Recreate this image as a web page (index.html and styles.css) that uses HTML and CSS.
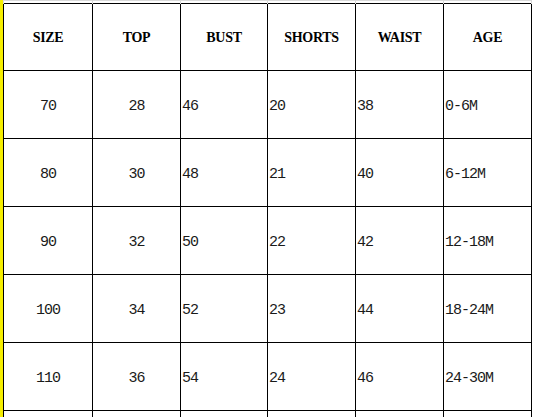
FILE: index.html
```html
<!DOCTYPE html>
<html>
<head>
<meta charset="utf-8">
<link rel="stylesheet" href="styles.css">
</head>
<body>
<div class="page">
  <div class="stripe"></div>
  <table class="sizes">
    <colgroup>
      <col class="c1"><col class="c2"><col class="c3"><col class="c4"><col class="c5"><col class="c6">
    </colgroup>
    <tr class="pad"><td></td><td></td><td></td><td></td><td></td><td></td></tr>
    <tr class="head">
      <th>SIZE</th><th>TOP</th><th>BUST</th><th>SHORTS</th><th>WAIST</th><th>AGE</th>
    </tr>
    <tr><td class="ctr">70</td><td class="ctr">28</td><td>46</td><td>20</td><td>38</td><td>0-6M</td></tr>
    <tr><td class="ctr">80</td><td class="ctr">30</td><td>48</td><td>21</td><td>40</td><td>6-12M</td></tr>
    <tr><td class="ctr">90</td><td class="ctr">32</td><td>50</td><td>22</td><td>42</td><td>12-18M</td></tr>
    <tr><td class="ctr">100</td><td class="ctr">34</td><td>52</td><td>23</td><td>44</td><td>18-24M</td></tr>
    <tr><td class="ctr">110</td><td class="ctr">36</td><td>54</td><td>24</td><td>46</td><td>24-30M</td></tr>
    <tr><td class="ctr"></td><td class="ctr"></td><td></td><td></td><td></td><td></td></tr>
  </table>
</div>
</body>
</html>
```
FILE: styles.css
```css
html, body {
  margin: 0;
  padding: 0;
  background: #ffffff;
  overflow: hidden;
}

.page {
  display: flex;
  align-items: flex-start;
  height: 417px;
  overflow: hidden;
}

.stripe {
  width: 3px;
  flex: 0 0 3px;
  height: 417px;
  background: #f5ee00;
}

.sizes {
  border-collapse: collapse;
  table-layout: fixed;
  width: 529px;
  flex: 0 0 auto;
  font-family: "Liberation Mono", "DejaVu Sans Mono", monospace;
  color: #000;
}

.c1 { width: 89px; }
.c2 { width: 88px; }
.c3 { width: 87px; }
.c4 { width: 88px; }
.c5 { width: 88px; }
.c6 { width: 88px; }

.sizes td, .sizes th {
  border: 1px solid #000;
  padding: 3px 0 0 1px;
  height: 64px;
  vertical-align: middle;
  text-align: left;
  font-size: 15px;
  letter-spacing: -1px;
  font-weight: normal;
  white-space: nowrap;
  color: #1a1a1a;
}

.sizes tr.pad td {
  height: 2px;
  padding: 0;
  border-top: 1px solid #d9d9d9;
  border-left: 1px solid #d9d9d9;
  border-right: 1px solid #d9d9d9;
  border-bottom: none;
}

.sizes th {
  font-family: "Liberation Serif", "DejaVu Serif", serif;
  font-weight: bold;
  text-align: center;
  font-size: 14px;
  letter-spacing: -0.3px;
  padding: 2px 0 0 0;
  color: #000;
}

.sizes td.ctr {
  text-align: center;
  padding: 3px 0 0 0;
}
```
